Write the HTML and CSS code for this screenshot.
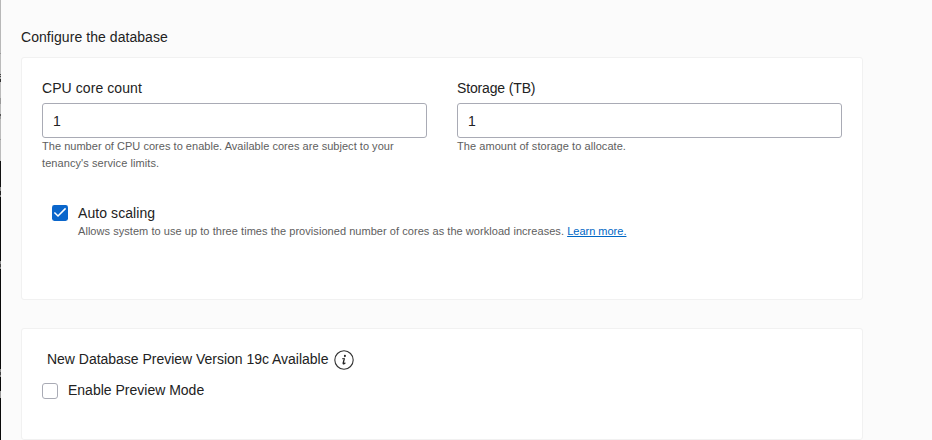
FILE: index.html
```html
<!DOCTYPE html>
<html lang="en">
<head>
<meta charset="utf-8">
<title>Configure the database</title>
<link rel="stylesheet" href="styles.css">
</head>
<body>
<div class="edge"></div>
<main class="page">
  <h2 class="heading">Configure the database</h2>
  <section class="card card-config">
    <div class="fields">
      <div class="field">
        <label class="label label-cpu" for="cpu">CPU core count</label>
        <input class="input" id="cpu" type="text" value="1">
        <p class="hint">The number of CPU cores to enable. Available cores are subject to your<br><span class="hint-end">tenancy's service limits.</span></p>
      </div>
      <div class="field">
        <label class="label label-storage" for="storage">Storage (TB)</label>
        <input class="input" id="storage" type="text" value="1">
        <p class="hint hint-storage">The amount of storage to allocate.</p>
      </div>
    </div>
    <div class="option">
      <svg class="check" viewBox="0 0 16 16" role="img" aria-label="Checked"><rect width="16" height="16" rx="2.4" fill="#0a66cb"/><path d="M2.4 7.5 6 11 13.6 3.4" fill="none" stroke="#fff" stroke-width="1.5"/></svg>
      <div class="option-text">
        <div class="label label-auto">Auto scaling</div>
        <p class="hint hint-auto">Allows system to use up to three times the provisioned number of cores as the workload increases. <a class="link" href="#">Learn more.</a></p>
      </div>
    </div>
  </section>
  <section class="card card-preview">
    <div class="preview-title">
      <span class="preview-name">New Database Preview Version 19c Available</span>
      <svg class="info" viewBox="0 0 20 20" role="img" aria-label="Information"><circle cx="10" cy="10" r="9.2" fill="none" stroke="#333" stroke-width="1.1"/><circle cx="10.9" cy="5.9" r="1.05" fill="#222"/><path d="M8 8.8 10.5 8.3" fill="none" stroke="#222" stroke-width=".8"/><path d="M10.4 8.3 9.2 13Q9 14.3 10 13.8L11.4 12.7" fill="none" stroke="#222" stroke-width="1.3"/></svg>
    </div>
    <label class="preview-option"><span class="box"></span><span>Enable Preview Mode</span></label>
  </section>
</main>
</body>
</html>
```
FILE: styles.css
```css
* { box-sizing: border-box; }
body {
  margin: 0;
  height: 440px;
  overflow: hidden;
  display: flex;
  background: #fbfbfb;
  color: #222;
  font: 14px/20px "Liberation Sans", Arial, sans-serif;
}
.edge {
  width: 1px;
  height: 440px;
  background: linear-gradient(#b8b8b8 0 53px, #999 53px 54px, #bbb 54px 74px, #444 74px 75px, #aaa 75px 76px, #444 76px 77px, #aaa 77px 79px, #333 79px 82px, #bbb 82px 98px, #999 98px 104px, #bbb 104px 114px, #555 114px 116px, #999 116px 119px, #bbb 119px 139px, #999 139px 140px, #bbb 140px 161px, #111 161px 187px, #888 187px 191px, #222 191px 195px, #888 195px 197px, #0a0a0a 197px 261px, #888 261px 264px, #444 264px 267px, #888 267px 269px, #0a0a0a 269px 369px, #888 369px 372px, #444 372px 375px, #888 375px 377px, #0a0a0a 377px 391px, #999 391px 398px, #0a0a0a 398px);
}
.page { width: 862px; padding: 27px 0 0 20px; }
.heading { margin: 0 0 10px; font-size: 14px; font-weight: 400; line-height: 20px; letter-spacing: .06px; }
.card { width: 842px; background: #fff; border: 1px solid #f1f1f1; border-radius: 3px; }
.card-config { height: 243px; padding: 20px; }
.card-preview { height: 112px; margin-top: 28px; padding: 20px; }
.fields { display: flex; gap: 30px; height: 125px; }
.field { width: 385px; }
.label { display: block; line-height: 20px; }
.label-cpu, .label-auto { letter-spacing: .08px; }
.label-storage { letter-spacing: -.15px; }
.input {
  display: block;
  width: 385px;
  height: 35px;
  margin: 5px 0 0;
  padding: 1px 10px 0;
  border: 1px solid #a9abb5;
  border-radius: 3px;
  background: #fff;
  color: #222;
  font: inherit;
}
.hint { margin: 0; font-size: 11px; line-height: 17px; letter-spacing: .03px; color: #5e5e5e; white-space: nowrap; }
.hint-end { letter-spacing: .08px; }
.hint-storage { letter-spacing: .06px; }
.hint-auto { letter-spacing: .05px; }
.option { display: flex; gap: 10px; padding-left: 10px; }
.check { width: 16px; height: 16px; margin-top: 2px; }
.link { color: #0067c5; letter-spacing: 0; text-decoration: underline; }
.preview-title { display: flex; align-items: center; gap: 6px; height: 22px; padding-left: 5px; margin-top: -1px; }
.preview-name { letter-spacing: -.02px; }
.info { width: 20px; height: 20px; margin-top: 1px; }
.preview-option { display: flex; gap: 10px; margin-top: 10px; }
.box { width: 16px; height: 16px; margin-top: 3px; border: 1px solid #a9abb5; border-radius: 3px; }
```
